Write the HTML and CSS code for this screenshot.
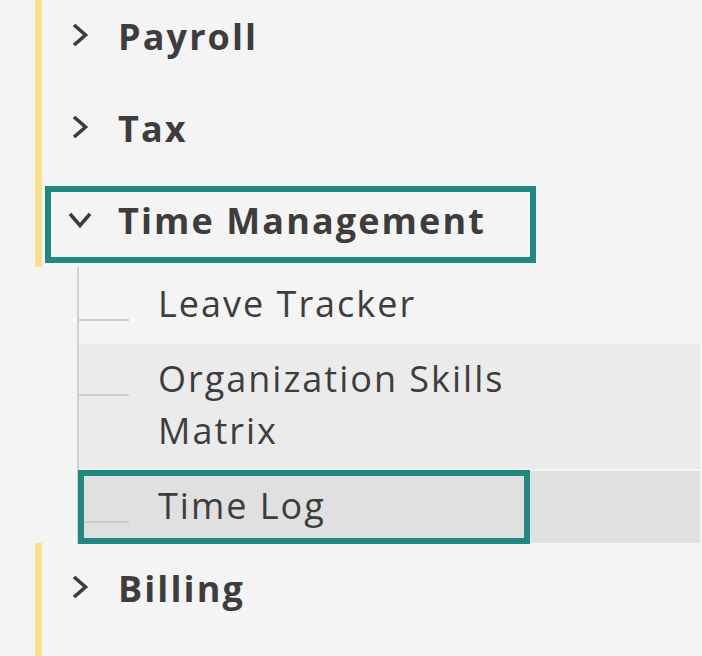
FILE: index.html
```html
<!DOCTYPE html>
<html lang="en">
<head>
<meta charset="utf-8">
<title>Menu</title>
<link rel="stylesheet" href="styles.css">
</head>
<body>
<nav class="menu">
  <div class="group">
    <div class="group-head">
      <button class="toggle" type="button">
        <svg class="chev" viewBox="0 0 22 22"><polyline points="5,1 16.5,11 5,21"/></svg>
        <span class="label">Payroll</span>
      </button>
    </div>
  </div>
  <div class="group">
    <div class="group-head">
      <button class="toggle" type="button">
        <svg class="chev" viewBox="0 0 22 22"><polyline points="5,1 16.5,11 5,21"/></svg>
        <span class="label">Tax</span>
      </button>
    </div>
  </div>
  <div class="group open">
    <div class="group-head">
      <button class="toggle is-focused" type="button">
        <svg class="chev down" viewBox="0 0 22 22"><polyline points="1,5 11,16.5 21,5"/></svg>
        <span class="label">Time Management</span>
      </button>
    </div>
    <ul class="children">
      <li class="child"><a class="link" href="#"><span class="connector"></span><span class="text">Leave Tracker</span></a></li>
      <li class="child is-hover"><a class="link" href="#"><span class="connector"></span><span class="text">Organization Skills Matrix</span></a></li>
      <li class="child is-active"><a class="link is-focused" href="#"><span class="connector"></span><span class="text">Time Log</span></a></li>
    </ul>
  </div>
  <div class="group last">
    <div class="group-head">
      <button class="toggle" type="button">
        <svg class="chev" viewBox="0 0 22 22"><polyline points="5,1 16.5,11 5,21"/></svg>
        <span class="label">Billing</span>
      </button>
    </div>
  </div>
</nav>
</body>
</html>
```
FILE: styles.css
```css
body {
  margin: 0;
  background: #f4f4f4;
  font-family: "Open Sans", "DejaVu Sans", sans-serif;
  color: #3d3d3d;
  overflow: hidden;
}

.menu {
  width: 700px;
  margin-top: -9px;
}

.group-head {
  margin-left: 35px;
  border-left: 7px solid #f9e08a;
  padding: 11px 0 4px 3px;
}

.group.last .group-head {
  padding-bottom: 40px;
}

.toggle {
  display: flex;
  align-items: flex-start;
  width: 491px;
  height: 77px;
  box-sizing: border-box;
  border: 6px solid transparent;
  padding: 4px 0 0 18px;
  margin: 0;
  background: none;
  font-family: inherit;
  font-size: 36px;
  font-weight: 700;
  letter-spacing: 2.1px;
  line-height: 50px;
  color: #3d3d3d;
  text-align: left;
}

.toggle.is-focused {
  border-color: #1f8880;
}

.chev {
  flex: none;
  width: 22px;
  height: 22px;
  margin: 12px 27px 0 0;
  fill: none;
  stroke: #3d3d3d;
  stroke-width: 3.6;
}

.chev.down {
  margin-top: 13px;
}

.children {
  list-style: none;
  margin: 0 0 0 77px;
  padding: 2px 0 0;
  border-left: 2px solid #d0d0d0;
}

.child.is-hover {
  background: #ebebeb;
}

.child.is-active {
  margin-top: 2px;
  background: #e0e0e0;
}

.link {
  display: flex;
  align-items: flex-start;
  width: 450px;
  padding: 9px 0 14px;
  color: #3d3d3d;
  text-decoration: none;
  font-size: 36px;
  line-height: 52px;
  letter-spacing: 2px;
}

.child.is-hover .link {
  padding-bottom: 12px;
}

.child.is-active .link {
  padding-bottom: 11px;
}

.link.is-focused {
  outline: 6px solid #1f8880;
  outline-offset: -5px;
}

.connector {
  flex: none;
  width: 50px;
  height: 2px;
  margin-top: 41px;
  background: #cccccc;
}

.text {
  margin-left: 29px;
}
```
